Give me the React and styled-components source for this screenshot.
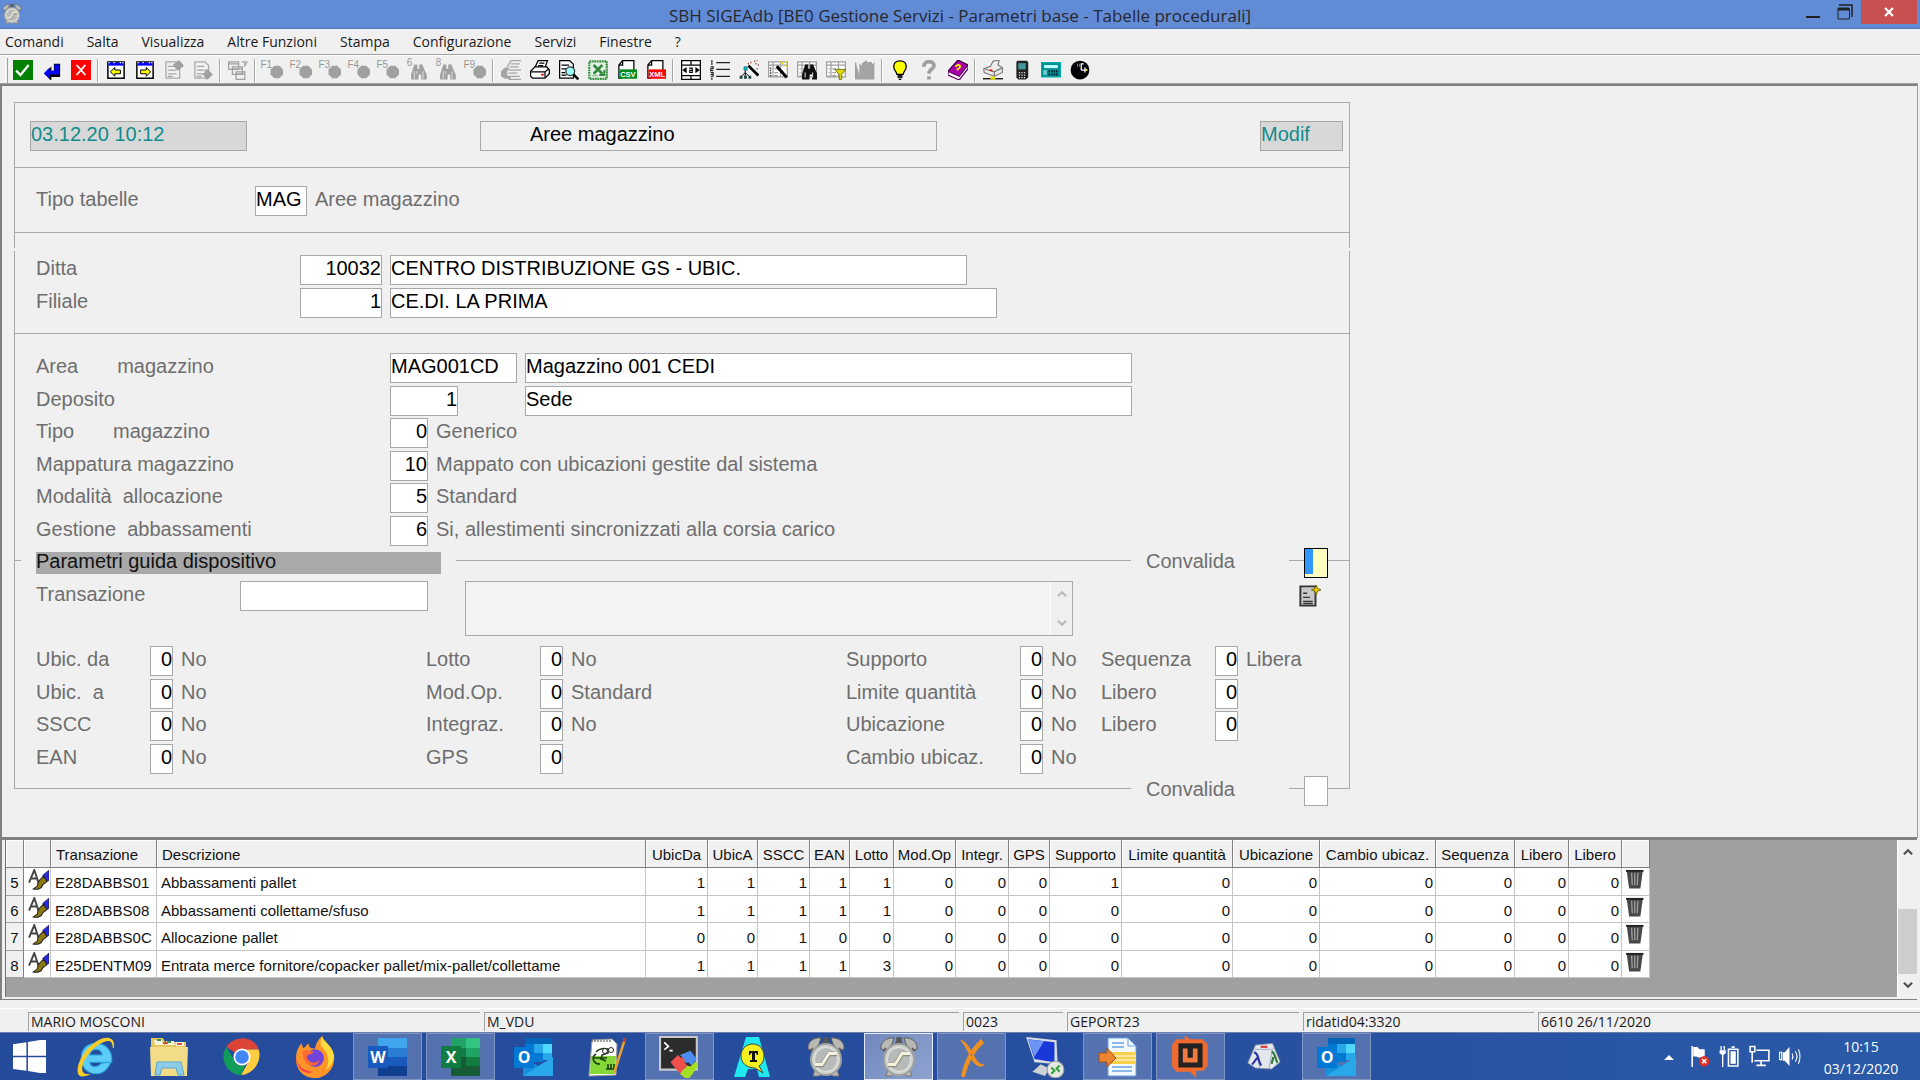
import React, { useId } from 'react';
import styled, { createGlobalStyle, css } from 'styled-components';

const GlobalStyle = createGlobalStyle`
  *, *::before, *::after { box-sizing: border-box; }
  body { margin: 0; background: #f0f0f0; }
  button, input, textarea { font: inherit; color: inherit; margin: 0; border-radius: 0; }
  button { background: none; border: none; padding: 0; }
  svg { display: block; }
`;

const uiFont = `'Open Sans', 'Noto Sans', sans-serif`;
const formFont = `'Liberation Sans', Arial, sans-serif`;

/* ---------- window ---------- */

const Window = styled.div`
  display: flex;
  flex-direction: column;
  min-height: 100vh;
  background: #f0f0f0;
  color: #1a1a1a;
  font-family: ${uiFont};
`;

const TitleBar = styled.header`
  display: grid;
  grid-template-columns: 1fr auto 1fr;
  height: 29px;
  background: #628bd6;
  border-bottom: 1px solid #5474b4;
  color: #26282e;
`;

const AppIcon = styled.div`
  padding: 4px 2px;
`;

const Title = styled.h1`
  margin: 0;
  font-size: 17px;
  font-weight: 400;
  line-height: 32px;
  white-space: nowrap;
`;

const WindowControls = styled.div`
  display: flex;
  justify-content: flex-end;
  align-items: flex-start;
  padding-right: 3px;
`;

const WindowButton = styled.button`
  display: flex;
  align-items: center;
  justify-content: center;
  width: ${p => (p.$close ? 56 : 32)}px;
  height: 24px;
  background: ${p => (p.$close ? '#c75050' : 'none')};
`;

const MenuBar = styled.nav`
  display: flex;
  gap: 23px;
  height: 26px;
  padding: 0 5px;
  border-bottom: 1px solid #a0a0a0;
`;

const MenuLink = styled.a`
  font-size: 14px;
  line-height: 25px;
  color: #1a1a1a;
  text-decoration: none;
`;

const ToolBar = styled.div`
  display: flex;
  height: 29px;
  padding: 2px 0 0 5px;
  border-top: 1px solid #fff;
`;

const ToolGrip = styled.span`
  width: 3px;
  height: 26px;
  border-left: 1px solid #fff;
  border-right: 1px solid #a0a0a0;
`;

const ToolSeparator = styled.span`
  width: 2px;
  height: 23px;
  margin: 1px 2px 0;
  background: #a8a8a8;
  border-right: 1px solid #fff;
`;

const ToolButton = styled.button`
  display: flex;
  justify-content: center;
  width: 29px;
  padding-top: 2px;
`;

/* ---------- form ---------- */

const Workspace = styled.main`
  flex: 1;
  padding: 16px 12px 30px 12px;
  border: solid #808080;
  border-width: 2px 0 0 2px;
  outline: 1px solid #a0a0a0;
  margin-right: 3px;
  font-family: ${formFont};
  font-size: 20px;
  line-height: 24px;
`;

const FrameBlock = styled.div`
  max-width: 1336px;
  border: solid #a8a8a8;
  border-width: ${p => (p.$top ? '1px 1px 0' : '0 1px')};
  padding-bottom: ${p => (p.$top ? 15 : 0)}px;
  & + & { margin-top: 3px; padding-top: 4px; }
`;

const Section = styled.section`
  padding: 18px 6px 16px 21px;
  border-bottom: 1px solid #a8a8a8;
`;

const Heading = styled.div`
  display: grid;
  grid-template-columns: 450px 1fr 83px;
  margin-left: -6px;
`;

const Group = styled.section`
  padding: ${p => p.$pad || '0'};
  border-bottom: ${p => (p.$line ? '1px solid #a8a8a8' : 'none')};
`;

const Row = styled.div`
  display: grid;
  grid-template-columns: ${p => p.$cols};
  column-gap: 8px;
  align-items: start;
  height: 32px;
  padding-left: 21px;
  &:nth-child(odd) { height: 33px; }
`;

const TipoRow = styled.div`
  display: grid;
  grid-template-columns: 211px 52px auto;
  column-gap: 8px;
  justify-content: start;
`;

const Label = styled.label`
  padding-top: 1px;
  color: #6e6e6e;
  white-space: pre;
`;

const Note = styled.span`
  padding-top: 1px;
  color: #6e6e6e;
  white-space: nowrap;
`;

const Field = styled.input`
  width: ${p => (p.$w ? `${p.$w}px` : '100%')};
  height: 30px;
  padding: 0 0 4px;
  border: 1px solid #a8a8a8;
  background: #fff;
  color: #000;
  line-height: 24px;
  text-align: ${p => (p.$num ? 'right' : 'left')};
  outline: none;

  ${p => p.$status && css`
    background: #d8d8d8;
    color: #118c8c;
  `}
  ${p => p.$caption && css`
    background: #f0f0f0;
    padding-left: 49px;
  `}
  ${p => p.$current && css`
    border-color: #000;
    background: linear-gradient(#3296ff, #3296ff) 0 0 / 8px 25px no-repeat #ffffc0;
  `}
`;

const Legend = styled.div`
  display: flex;
  align-items: flex-start;
  height: ${p => (p.$last ? 13 : 33)}px;
`;

const Rule = styled.span`
  flex: ${p => (p.$w ? `0 0 ${p.$w}px` : '1')};
  height: 1px;
  margin-top: 12px;
  background: #a8a8a8;
`;

const LegendTitle = styled.h2`
  width: 405px;
  height: 22px;
  margin: 4px 15px 0;
  background: #a9a9a9;
  color: #111;
  font-size: 20px;
  font-weight: 400;
  line-height: 18px;
`;

const LegendLabel = styled(Label)`
  width: 158px;
  padding-left: 15px;
`;

const TransactionRow = styled.div`
  display: grid;
  grid-template-columns: 196px 217px 608px 1fr;
  column-gap: 8px;
  align-items: start;
  height: 65px;
  padding: 0 28px 0 21px;
`;

const MemoBox = styled.div`
  display: flex;
  height: 55px;
  border: 1px solid #a8a8a8;
  background: #f3f3f3;
`;

const Memo = styled.textarea`
  flex: 1;
  border: none;
  padding: 0;
  resize: none;
  background: none;
  outline: none;
`;

const ScrollColumn = styled.div`
  display: flex;
  flex-direction: column;
  justify-content: space-between;
  width: ${p => (p.$wide ? 20 : 22)}px;
  border-left: 1px solid #fff;
  background: #f0f0f0;
  color: ${p => (p.$wide ? '#505050' : '#b8b8b8')};
`;

const ScrollButton = styled.button`
  display: flex;
  align-items: center;
  justify-content: center;
  height: 24px;
`;

const Thumb = styled.div`
  height: 67px;
  margin-top: 46px;
  background: #cdcdcd;
`;

const NewButton = styled.button`
  justify-self: end;
  padding-top: 4px;
`;

/* ---------- grid ---------- */

const GridPanel = styled.section`
  display: flex;
  height: 163px;
  margin-right: 3px;
  border-top: 3px solid #808080;
  border-left: 2px solid #808080;
  border-bottom: 1px solid #808080;
  padding-bottom: 2px;
  padding-left: 3px;
  font-family: ${formFont};
`;

const GridArea = styled.div`
  flex: 1;
  min-width: 0;
  overflow: hidden;
  background: #a0a0a0;
  border-left: 1px solid #707070;
`;

const Grid = styled.table`
  table-layout: fixed;
  width: 1644px;
  border-collapse: separate;
  border-spacing: 0;
  background: #fff;
  color: #111;
  font-size: 15px;
  line-height: 20px;
  white-space: nowrap;

  tbody tr { height: 27px; }
  tbody tr:nth-child(odd) { height: 28px; }
`;

const HeadCell = styled.th`
  height: 28px;
  padding: ${p => (p.$left ? '3px 0 0 5px' : '3px 0 0')};
  background: #f0f0f0;
  border: solid #808080;
  border-width: 0 1px 1px 0;
  box-shadow: inset 1px 1px #fff;
  font-weight: 400;
  text-align: ${p => (p.$left ? 'left' : 'center')};
`;

const RowHead = styled.th`
  padding: 3px 0 0;
  background: #f0f0f0;
  border: solid #808080;
  border-width: 0 1px 1px 0;
  border-bottom-color: #a0a0a0;
  font-weight: 400;
`;

const Cell = styled.td`
  padding: ${p => (p.$num ? '3px 2px 0 0' : '3px 0 0 4px')};
  border: solid #c4c4c4;
  border-width: 0 1px 1px 0;
  text-align: ${p => (p.$num ? 'right' : 'left')};
`;

const IconCell = styled(Cell)`
  padding: 1px 0 0 4px;
  vertical-align: top;
`;

const CellButton = styled.button`
  display: block;
`;

/* ---------- status bar and task bar ---------- */

const StatusBar = styled.footer`
  display: grid;
  grid-template-columns: 452fr 475fr 100fr 232fr 231fr 382fr;
  column-gap: 4px;
  margin-top: 8px;
  padding: 3px 0 1px 28px;
  border-top: 1px solid #fff;
`;

const StatusCell = styled.div`
  height: 19px;
  padding-left: 2px;
  border: solid #a0a0a0;
  border-width: 1px 0 0 1px;
  font-size: 14px;
  line-height: 18px;
  white-space: nowrap;
`;

const TaskBar = styled.div`
  display: flex;
  height: 48px;
  background: linear-gradient(90deg, #254b9b, #274f9f 60%, #2a5aa8);
  border-top: 1px solid #6a7fae;
`;

const StartButton = styled.button`
  width: 61px;
  padding-left: 13px;
`;

const Tasks = styled.div`
  display: flex;
  flex: 1;
  gap: 4px;
`;

const TaskButton = styled.button`
  display: flex;
  align-items: center;
  justify-content: center;
  width: 69px;
  border: 1px solid transparent;
  ${p => p.$open && css`
    background: #5471b0;
    border-color: #8296c4;
  `}
  ${p => p.$active && css`
    background: linear-gradient(135deg, #7088bd, #8fa3d0);
    border-color: #e4eaf6;
  `}
`;

const Tray = styled.div`
  display: flex;
  align-items: center;
  gap: 7px;
  color: #fff;
`;

const TrayButton = styled.button`
  width: 23px;
`;

const Clock = styled.time`
  width: 112px;
  padding: 2px 6px 0 0;
  font-size: 14px;
  line-height: 22px;
  text-align: center;
`;

/* ---------- icons ---------- */

const Pic = ({ size = 20, box = 16, children, ...rest }) => (
  <svg width={size} height={size} viewBox={`0 0 ${box} ${box}`} fill="none" aria-hidden="true" {...rest}>
    {children}
  </svg>
);

const AlarmClock = ({ size }) => (
  <Pic size={size} box={40}>
    <path d="M10 30l-3 9h6l4-4zM30 30l3 9h-6l-4-4z" fill="#b8b8b4" stroke="#777" />
    <path d="M2 12C1 5 8 0 15 1l-2 6-6 7zM38 12c1-7-6-12-13-11l2 6 6 7z" fill="#b8b8b4" stroke="#5c5c58" />
    <path d="M18 1h4v6h-4zM4 14l3-3M36 14l-3-3M16 6h8" fill="#555" stroke="#555" strokeWidth="1.500" />
    <ellipse cx="20" cy="22.500" rx="15" ry="15.500" fill="#d2d4d0" stroke="#a0a29e" strokeWidth="2" />
    <ellipse cx="20" cy="22.500" rx="11.500" ry="12" fill="#b6bab8" stroke="#e6e6e2" />
    <path d="M9 28h7l7-11h8" stroke="#8c8c80" strokeWidth="4.500" />
    <path d="M9 27.500h7l7-11h8" stroke="#f4f2dc" strokeWidth="2.800" />
  </Pic>
);

const Ok = () => (
  <Pic><path fill="#008000" d="M0 0h16v16H0z" /><path d="M2.500 8.500L6 12l6.500-8" stroke="#fff" strokeWidth="1.800" /></Pic>
);
const Enter = () => (
  <Pic>
    <path d="M2.500 11L7 6.500V9h3V3.500h4V13H7v2.500z" fill="#000" stroke="#000" />
    <path d="M1.500 10.500L6 6v2.500h4V3.500h3.500v8H6V15z" fill="#00f" />
  </Pic>
);
const Cancel = () => (
  <Pic><path fill="#f00" d="M0 0h16v16H0z" /><path d="M4.500 4l7 8m0-8l-7 8" stroke="#fff" strokeWidth="1.500" /></Pic>
);
const PageTurn = ({ next }) => (
  <Pic>
    <path d="M1.500 1.500h13v13h-13z" fill="#fff" stroke="#000" strokeWidth="1.200" />
    <path d="M2 2h12v2.500H2z" fill="#00f" />
    <path d="M2 2h1m3 0h1m4 0h1m1 0h1" stroke="#fff" />
    <path d={next ? 'M12.500 9.500L9 6v2H4.500v3H9v2z' : 'M3.500 9.500L7 6v2h4.500v3H7v2z'} fill="#ff0" stroke="#000" strokeWidth=".8" />
  </Pic>
);
const DimPage = ({ low }) => (
  <Pic>
    <path d="M1.500 1.500h8l3 3v10h-11zM3 5h6M3 8h7M3 11h7M3 13h4" stroke="#a8a8a8" />
    <path d={low ? 'M11 7l5 4.500-5 4.500-3-4.500z' : 'M7 4l5-4 4 4.500-5 4z'} fill="#a0a0a0" />
  </Pic>
);
const DimWindows = () => (
  <Pic>
    <path d="M.5 1.500h8v6h-8zM3.500 5.500h8v6h-8zM6.500 9.500h7v6h-7zM1 3h8M4 7h8M7 11h7M11 1.500h2.500V5m2-4L13 5.500" stroke="#a0a0a0" />
  </Pic>
);
const KeyMark = styled.text`
  font-family: ${formFont};
  font-size: 8px;
  fill: #989898;
`;
const FnKey = ({ name }) => (
  <Pic overflow="visible">
    <KeyMark x="-2" y="6">{name}</KeyMark>
    <path d="M9 4.500h4l3 3v4l-3 3H9l-3-3v-4z" fill="#a0a0a0" />
  </Pic>
);
const Glasses = ({ fill = '#a0a0a0' }) => (
  <path d="M4 3.500h2.500V7H8V3.500h2.500l1.500 4 2 4v4H9.500v-4h-2v4H1.500v-4z" fill={fill} />
);
const FnFind = ({ name }) => (
  <Pic overflow="visible">
    <KeyMark x="-1" y="5">{name}</KeyMark>
    <g transform="translate(1 0)"><Glasses /></g>
    <path d="M5 9v6m2-6v2m5-2v6" stroke="#e8e8e8" strokeWidth=".7" />
  </Pic>
);
const Printer = () => (
  <Pic>
    <path d="M4 6L6.500.500h7.500L12 6" fill="#fff" stroke="#000" /><path d="M7.500 2.500h4M6.500 4.500h4" stroke="#000" />
    <path d="M.5 9L4 5.500h9.500L15.500 8v3L12 14.500H2L.5 13z" fill="#fff" stroke="#000" />
    <path d="M1 9.500h11l3-2.500M12 9.500v4.500" stroke="#000" /><path d="M9 11.800h2" stroke="#e00" strokeWidth="1.500" />
  </Pic>
);
const DimPrinter = () => (
  <Pic>
    <path d="M5 5.500L8 .5h8M8 3h7M7 5.500h7M6 8h10M6 10.500h7M6 13h9M6 15.500h10" stroke="#a4a4a4" />
    <path d="M0 9l3-3h4l-2 3v3l3 2v1H3l-3-2z" fill="#a4a4a4" />
  </Pic>
);
const Preview = () => (
  <Pic>
    <path d="M.5 .5h8l3 3v11H.500z" fill="#fff" stroke="#000" />
    <path d="M2 4h6M2 7h4M2 10h3M2 12h4" stroke="#000" />
    <circle cx="9" cy="9" r="3.500" fill="#9ff" stroke="#333" />
    <path d="M11.500 11.500l4 4" stroke="#000" strokeWidth="2" />
  </Pic>
);
const Excel = () => (
  <Pic>
    <path d="M1 1h14v14H1z" fill="#e4f0e4" stroke="#3c9246" strokeWidth="1.800" strokeDasharray="1.500 .500" />
    <path d="M4.500 4l7 7M11.500 4l-7 7" stroke="#2f8a3a" strokeWidth="2" />
    <path d="M9 12h4V8" stroke="#2f8a3a" strokeWidth="1.500" /><path d="M3 12.500h5" stroke="#8cc08c" />
  </Pic>
);
const FileTag = styled.text`
  font-family: ${formFont};
  font-size: 6px;
  font-weight: 700;
  fill: #fff;
`;
const TaggedFile = ({ tag, color }) => (
  <Pic>
    <path d="M1.500 15V4L4.500.500h9V8M4.500.500V4h-3M1.500 14.500H4" fill="#fff" stroke="#000" />
    <path d="M2 7.500h14V15H2z" fill={color} />
    <FileTag x="2.500" y="13.500">{tag}</FileTag>
  </Pic>
);
const Fit = () => (
  <Pic>
    <path d="M.5 .5h15v15H.500zM.500 4h15M.500 12.500h15M8 .5v3.500m0 8.500V15" stroke="#000" fill="#fff" />
    <path d="M4.500 5.500v5L1 8zM11.500 5.500v5L15 8z" fill="#000" />
    <path d="M6.500 6.500H9V10H7V8.300h2" stroke="#000" strokeWidth=".9" />
  </Pic>
);
const Numbered = () => (
  <Pic>
    <path d="M5 2h11M5 7.500h11M5 13h11" stroke="#222" />
    <path d="M1.500 0v4M.500 5.500h2v1.500h-2v1.500h2M.500 10h2v1.500h-2m2 0V13h-2M1.500 14v2" stroke="#222" strokeWidth=".9" />
  </Pic>
);
const Wand = () => (
  <Pic>
    <path d="M5 6v4m0 0l-3 3m3-3l3 3M5 10v3" stroke="#000" strokeWidth=".8" />
    <path d="M4 5.500h2.500V8H4z" fill="#0cc" stroke="#067" strokeWidth=".6" />
    <path d="M.5 12.500h2.300v2.500H.500zM4 12.500h2.300v2.500H4zM7.500 12.500h2.300v2.500H7.500z" fill="#244" />
    <path d="M7.500 4.500l8 8" stroke="#000" strokeWidth="2.200" />
    <path d="M9 2h1m2-1h1m1-1h1m-2 3h1m1 1h1m-9-1h1m6 4h1" stroke="#a44" strokeWidth="1.300" />
  </Pic>
);
const Sheet = () => (
  <path d="M.5 1.500h15v12H.500zM1 4h14M4 2v11M10 2v11M2 7h1m2 0h3m-6 3h1m2 0h3m-6 2.500h1m2 0h3" stroke="#a0a0a0" fill="#fff" />
);
const SheetWand = () => (
  <Pic><Sheet /><path d="M2 6v7" stroke="#222" strokeDasharray="1 1" /><path d="M7 5l8 9" stroke="#000" strokeWidth="2.400" /><path d="M9 1.500h1m1 1h1m2-1h1m-3 3h1m1 0h1" stroke="#dd0" strokeWidth="1.400" /></Pic>
);
const SheetFind = () => (
  <Pic><Sheet /><g transform="translate(2.500 0)"><Glasses fill="#111" /></g><path d="M6.500 10v4m6-4v4" stroke="#fff" strokeWidth=".7" /></Pic>
);
const SheetFilter = () => (
  <Pic><Sheet /><path d="M7 7.500h9l-3.500 4v4h-2v-4z" fill="#dd0" stroke="#550" strokeWidth=".6" /></Pic>
);
const DimChart = () => (
  <Pic><path d="M.5 2v13H15V3l-2 2V2h-2v3L9 1 6 3v3L4 4v9" fill="#a4a4a4" stroke="#a0a0a0" /></Pic>
);
const Bulb = () => (
  <Pic>
    <path d="M8 .7C4.500.700 3 3 3 5.500c0 2.500 2.500 4 2.500 6h5c0-2 2.500-3.500 2.500-6C13 3 11.500.7 8 .7z" fill="#ff0" stroke="#000" />
    <path d="M6 12h4v2.500H6z" fill="#222" /><path d="M7 15.500h2" stroke="#000" />
  </Pic>
);
const DimHelp = () => (
  <Pic><path d="M4 5.500C3.500 0 12 0 12 4.500c0 3-4 2.500-4 6.500m0 2v2.500" stroke="#a0a0a0" strokeWidth="3" /></Pic>
);
const Book = () => (
  <Pic>
    <path d="M0 9L8 0l8 4-7 10z" fill="#a0a" stroke="#404" />
    <path d="M0 9l9 4 7-9v3l-7 9-9-4z" fill="#fff" stroke="#606" />
    <path d="M6 5.500c2-3 5-1 3 1l-2 1.500" stroke="#fe0" strokeWidth="1.500" />
  </Pic>
);
const NetPrinter = () => (
  <Pic>
    <path d="M.5 7L6 5l2-4 5-1-1 4 3.500 2v4L9 13l-8-3z" fill="#ececec" stroke="#777" strokeWidth=".9" />
    <path d="M1 7l8 2.500 6-3M9 9.500V13" stroke="#777" /><path d="M5.500 8l2 .500" stroke="#e00" strokeWidth="1.400" />
    <path d="M0 15h16" stroke="#000" /><path d="M6 14.500h4" stroke="#dd0" strokeWidth="2.500" />
  </Pic>
);
const Handheld = () => (
  <Pic>
    <path d="M4 .5h8l1 1.500v12l-2 1.500H5L3.500 14V2z" fill="#222" /><path d="M5 2.500h6v5H5z" fill="#499" />
    <path d="M5.500 10h5m-5 2h5m-5 2h5" stroke="#ddd" strokeDasharray="1 1" />
  </Pic>
);
const Terminal = () => (
  <Pic>
    <path d="M.5 2h15v11.500H.500z" fill="#008c8c" stroke="#0aa" /><path d="M2.500 4h11v2.500h-11z" fill="#bff" />
    <path d="M2.500 8v4m1.500-4v4" stroke="#bff" strokeWidth=".8" /><path d="M6 9h8M6 11.500h8" stroke="#023" strokeWidth="1.600" strokeDasharray="1.200 .800" />
  </Pic>
);
const Dial = () => (
  <Pic>
    <circle cx="8" cy="8" r="7.500" fill="#000" /><path d="M9 8V3h2M9 8h5m-2-2v4" stroke="#fff" />
    <path d="M6 3v2.500M7.500 3v2.500" stroke="#888" strokeWidth=".7" /><path d="M12 6l2 2-2 1" fill="#dd0" />
  </Pic>
);

const NewPage = () => (
  <Pic size={22}>
    <path d="M1 1h11v14H1z" fill="#c8c8c8" stroke="#333" strokeWidth="1.400" />
    <path d="M3 6h3M3 9h5M3 12h7M3 13.500h7" stroke="#333" />
    <path d="M12.500 0l1 2.500L16 3.500l-2.500 1-1 2.500-1-2.500L9 3.500l2.500-1z" fill="#e4c800" stroke="#665800" strokeWidth=".6" />
  </Pic>
);
const EditMark = () => (
  <Pic size={21} box={20}>
    <path d="M1 13L6 1l4 12M2 9h7" stroke="#444" strokeWidth="1.800" />
    <path d="M14 6l6-5v10l-5 2z" fill="#2828e0" stroke="#223" strokeWidth=".6" />
    <path d="M15 7l3 5-4 3c-1 4-5 5-9 4l4-3c0-4 3-7 6-9z" fill="#8c7a10" stroke="#222" />
  </Pic>
);
const Trash = () => (
  <Pic size={20}>
    <path d="M.5 1h13l-2 14.500h-9z" fill="#484848" /><path d="M4.500 3L5 13M7 3v10m2.500-10L9 13" stroke="#a4a4a4" />
    <path d="M0 1.500h14" stroke="#222" strokeWidth="1.500" />
  </Pic>
);
const Chevron = ({ down }) => (
  <svg width="10" height="8" viewBox="0 0 11 8" fill="none" aria-hidden="true">
    <path d={down ? 'M1 1.500l4.500 4.500L10 1.500' : 'M1 6.500L5.500 2 10 6.500'} stroke="currentColor" strokeWidth="2.400" />
  </svg>
);

const Letter = styled.text`
  font-family: 'Open Sans', sans-serif;
  font-size: 16px;
  font-weight: 700;
  fill: #fff;
  text-anchor: middle;
`;

const WindowsLogo = () => (
  <Pic size={33} box={32}>
    <path d="M0 4L13 2.200V15.200H0zM14.500 2L32 -1v16.200H14.500zM0 16.800h13v13L0 28zM14.500 16.800H32V33l-17.500-3z" fill="#fff" />
  </Pic>
);
const Explorer = () => (
  <Pic size={42} box={40}>
    <path d="M34 25c-2 6-7 11-14 11C12 36 6 30 6 21S12 7 20 7s15 6 15 15v3H14c1 5 7 6 11 1zM14 18h12c-1-7-11-7-12 0z" fill="#5ccdf8" stroke="#2aa4de" />
    <path d="M37 11C39-1 27 0 19 6 9 13 0 28 3 36c1 4 7 3 12 0-6 1-9-1-8-7 2-9 12-20 20-23 6-3 9-1 9 6z" fill="#f8cc28" />
  </Pic>
);
const Folder = () => (
  <Pic size={40} box={40}>
    <path d="M2 1h12l2 4h21v33H2z" fill="#e6c75c" /><path d="M5 3h8l2 5h-9zM17 4h8l1 4h-9zM27 5h8v4h-8z" fill="#f8f4dc" />
    <path d="M8 3h4M18 5h4" stroke="#3a9a4a" strokeWidth="2" /><path d="M14 6h5M28 7h5" stroke="#d8543c" strokeWidth="2" />
    <path d="M1 10h38l-1 29H2z" fill="#f2dc88" /><path d="M6 38l2-13h24l3 13h-6l-2-7H13l-2 7z" fill="#8ccce8" stroke="#5aa6d0" />
  </Pic>
);
const Chrome = () => (
  <Pic size={38} box={40}>
    <path d="M20 20L3.500 9.500C13-4 33-2 37.500 12H20z" fill="#db4437" />
    <path d="M20 12h17.500c4 12-5 26-18.500 27l8.500-15z" fill="#ffcd40" />
    <path d="M3.500 9.500l9 15c2 4 6 5 11 4L19 39C3 38-4 21 3.500 9.500z" fill="#0f9d58" />
    <circle cx="20" cy="20" r="9" fill="#fff" /><circle cx="20" cy="20" r="7.200" fill="#4285f4" />
  </Pic>
);
const Firefox = () => (
  <Pic size={42} box={40}>
    <path d="M27 0c0 5 9 8 11 18 2 12-7 22-18 22S1 32 2 20c0-5 2-9 5-13l2 5 5-5c0 4 2 5 6 5 1-5 3-9 7-12z" fill="#ff9428" />
    <path d="M27 0c0 5 9 8 11 18 0 8-4 12-8 14 6-9 1-18-4-22-1-4-1-7 1-10z" fill="#ffdc3c" />
    <path d="M2 20c1 9 8 14 16 14-7 4-16-3-16-14z" fill="#ff3a50" />
    <circle cx="20" cy="21" r="8.500" fill="#7444d8" /><path d="M8 14c5-2 7 1 11 1-2 3-6 2-7 5 2 6 8 7 12 3-1 8-16 8-16-9z" fill="#ff6a30" />
  </Pic>
);
const WordLogo = () => (
  <Pic size={40} box={40}>
    <path d="M10 1h29v10H10z" fill="#41a5ee" /><path d="M10 11h29v9H10z" fill="#2b7cd3" />
    <path d="M10 20h29v9H10z" fill="#185abd" /><path d="M10 29h29v10H10z" fill="#103f91" />
    <path d="M0 9h20v22H0z" fill="#185abd" /><Letter x="10" y="26">W</Letter>
  </Pic>
);
const ExcelLogo = () => (
  <Pic size={40} box={40}>
    <path d="M10 1h15v10H10z" fill="#21a366" /><path d="M25 1h14v10H25z" fill="#33c481" />
    <path d="M10 11h15v9H10z" fill="#107c41" /><path d="M25 11h14v9H25z" fill="#21a366" />
    <path d="M10 20h29v19H10z" fill="#185c37" /><path d="M25 20h14v9H25z" fill="#107c41" />
    <path d="M0 9h20v22H0z" fill="#107c41" /><Letter x="10" y="26">X</Letter>
  </Pic>
);
const OutlookLogo = () => (
  <Pic size={40} box={40}>
    <path d="M11 1h27v19H11z" fill="#0364b8" /><path d="M11 7h9v9h-9z" fill="#0078d4" /><path d="M20 7h9v9h-9z" fill="#28a8ea" />
    <path d="M29 7h9v9h-9z" fill="#50d9ff" /><path d="M20 16h9v9h-9z" fill="#0078d4" /><path d="M29 16h9v7h-9z" fill="#28a8ea" />
    <path d="M9 20l15 9 15-9v19H9z" fill="#1490df" /><path d="M9 39l30-19v19z" fill="#28a8ea" />
    <path d="M0 10h20v21H0z" fill="#0078d4" /><Letter x="10" y="26">O</Letter>
  </Pic>
);
const NotepadLogo = () => (
  <Pic size={40} box={40}>
    <path d="M5 3l20-1 5 5-1 31-27 1z" fill="#fff" stroke="#999" /><path d="M4 4h21" stroke="#444" strokeDasharray="2 1" />
    <path d="M4 19h25l-1 18H3z" fill="#86d838" />
    <path d="M9 15c4-4 8-4 12-3v4l-6 2-1 4 5 2M9 17c-5 3-3 10 4 10m-7-6h14m1 6v5m3-5v5m3-5v5m-8 0h10" stroke="#1c3c14" strokeWidth="1.600" />
    <circle cx="18" cy="14" r="2.500" fill="#fff" stroke="#222" /><circle cx="24" cy="13" r="2.500" fill="#fff" stroke="#222" />
    <path d="M38 2L27 36" stroke="#e8a030" strokeWidth="2.500" /><path d="M38 1l-1 4" stroke="#b84030" strokeWidth="3" />
  </Pic>
);
const CmderLogo = () => (
  <Pic size={42} box={40}>
    <path d="M1 1h35v31H1z" fill="#2c2c2c" stroke="#c8c8c8" strokeWidth="2" /><path d="M5 6l4 4-4 3m5 1h3" stroke="#fff" strokeWidth="1.600" />
    <path d="M11 25l7-7 3 3 3-2 2 3-2 3 3 3-7 8z" fill="#f0504c" /><path d="M20 18l10-4 6 8-5 6-3-3-3 1-1-4z" fill="#4c8ef0" />
    <path d="M20 36l7-8 3 1 5-5 2 5-8 11-3 1z" fill="#a4e020" />
  </Pic>
);
const AutoLogo = () => (
  <Pic size={40} box={40}>
    <path d="M13 0h13l11 40H26l-2-8h-9l-3 8H1z" fill="#1fe8f0" />
    <path d="M20 7c7 0 11 6 11 12 0 5-2 8-5 10l4 7-8-5C14 31 8 26 8 19S13 7 20 7z" fill="#f4f020" stroke="#444" />
    <path d="M16 14h9v4h-1l-1-2h-1v7h2v2h-7v-2h2v-7h-1l-1 2h-1z" fill="#111" />
  </Pic>
);
const CrossLogo = () => (
  <Pic size={40} box={40}>
    <path d="M10 4c4 1 7 7 11 14 3 6 6 10 10 10-2 2-7 1-11-6C16 14 14 9 10 4zM29 3C20 11 12 25 10 39l2 1c3-13 9-25 19-34z" fill="#f09020" stroke="#f09020" strokeWidth="1.500" />
  </Pic>
);
const RemoteLogo = () => (
  <Pic size={42} box={40}>
    <path d="M2 1l29 3 1 23-22-2z" fill="#d8dce4" /><path d="M4 3l25 3v19L10 22z" fill="#1838d8" /><path d="M4 3l15 2-9 15z" fill="#6c94f4" />
    <path d="M8 34l8-7 8 4-4 7z" fill="#ccd0d4" /><circle cx="30" cy="32" r="8" fill="#e4e8e4" stroke="#999" />
    <path d="M26 30l3 3-3 3m8-8l-3 3 3 3" stroke="#38a038" strokeWidth="2" />
  </Pic>
);
const ExportLogo = () => (
  <Pic size={40} box={40}>
    <path d="M10 1h20l8 8v30H10z" fill="#f2f8ff" stroke="#6aa2dc" /><path d="M30 1v8h8" stroke="#6aa2dc" />
    <path d="M14 6h12M14 10h12M14 30h20M14 34h20" stroke="#6aa2dc" strokeWidth="1.500" /><path d="M10 15h28v12H10z" fill="#f8d048" />
    <path d="M10 19h28M10 23h28" stroke="#fff" /><path d="M1 16h8v-5l9 10-9 9v-5H1z" fill="#ec8430" stroke="#a04c14" />
  </Pic>
);
const HexLogo = () => (
  <Pic size={42} box={40}>
    <path d="M6 3h8V-1l5 4h12l5 5v20l-4 5h-7v7l-6-6H6l-4-5V8z" fill="#f06a30" /><path d="M8 7h23v23H8z" fill="#222" />
    <path d="M14.500 12v11H24V12" stroke="#f07a40" strokeWidth="4.500" />
  </Pic>
);
const DiceLogo = () => (
  <Pic size={34} box={40}>
    <path d="M10 6l20-2 9 22-10 8-19-1-9-6z" fill="#e4e8ec" stroke="#8a94a8" /><path d="M10 12l5 21M30 10l-4 23M10 11h19" stroke="#98a4b8" />
    <path d="M16 8h8" stroke="#d83838" strokeWidth="2.500" /><path d="M8 15c6-1 5 12 9 15M12 21l-6 8" stroke="#2838a8" strokeWidth="2.500" />
    <path d="M29 14c4 0 4 9 7 13m-5-7l-2 8" stroke="#2a7a3a" strokeWidth="2.500" />
  </Pic>
);

/* ---------- data ---------- */

const menu = ['Comandi', 'Salta', 'Visualizza', 'Altre Funzioni', 'Stampa', 'Configurazione', 'Servizi', 'Finestre', '?'];

const toolGroups = [
  [['Conferma', <Ok />], ['Invio', <Enter />], ['Annulla', <Cancel />]],
  [['Pagina precedente', <PageTurn />], ['Pagina successiva', <PageTurn next />], ['Inizio', <DimPage />], ['Fine', <DimPage low />]],
  [['Finestre', <DimWindows />]],
  [
    ...['F1', 'F2', 'F3', 'F4', 'F5'].map(k => [k, <FnKey name={k} />]),
    ['F6', <FnFind name="6" />], ['F8', <FnFind name="8" />], ['F9', <FnKey name="F9" />],
  ],
  [
    ['Stampa video', <DimPrinter />], ['Stampa', <Printer />], ['Anteprima', <Preview />],
    ['Excel', <Excel />], ['CSV', <TaggedFile tag="CSV" color="#008c20" />], ['XML', <TaggedFile tag="XML" color="#f00" />],
  ],
  [
    ['Adatta colonne', <Fit />], ['Numerazione', <Numbered />], ['Struttura', <Wand />], ['Personalizza', <SheetWand />],
    ['Cerca', <SheetFind />], ['Filtra', <SheetFilter />], ['Grafico', <DimChart />],
  ],
  [['Suggerimenti', <Bulb />], ['Aiuto', <DimHelp />], ['Manuale', <Book />]],
  [['Stampante', <NetPrinter />], ['Palmare', <Handheld />], ['Terminale', <Terminal />], ['Sessione', <Dial />]],
];

const areaRows = [
  ['Tipo       magazzino', '0', 'Generico'],
  ['Mappatura magazzino', '10', 'Mappato con ubicazioni gestite dal sistema'],
  ['Modalità  allocazione', '5', 'Standard'],
  ['Gestione  abbassamenti', '6', 'Si, allestimenti sincronizzati alla corsia carico'],
];

const params = [
  [['Ubic. da', 'No'], ['Lotto', 'No'], ['Supporto', 'No'], ['Sequenza', 'Libera']],
  [['Ubic.  a', 'No'], ['Mod.Op.', 'Standard'], ['Limite quantità', 'No'], ['Libero', '']],
  [['SSCC', 'No'], ['Integraz.', 'No'], ['Ubicazione', 'No'], ['Libero', '']],
  [['EAN', 'No'], ['GPS', ''], ['Cambio ubicaz.', 'No']],
];

const columns = [
  ['', 18], ['', 27], ['Transazione', 106], ['Descrizione', 489], ['UbicDa', 62], ['UbicA', 50], ['SSCC', 52],
  ['EAN', 40], ['Lotto', 44], ['Mod.Op', 62], ['Integr.', 53], ['GPS', 41], ['Supporto', 72], ['Limite quantità', 111],
  ['Ubicazione', 87], ['Cambio ubicaz.', 116], ['Sequenza', 79], ['Libero', 54], ['Libero', 53], ['', 28],
];

const records = [
  [5, 'E28DABBS01', 'Abbassamenti pallet', [1, 1, 1, 1, 1, 0, 0, 0, 1, 0, 0, 0, 0, 0, 0]],
  [6, 'E28DABBS08', 'Abbassamenti collettame/sfuso', [1, 1, 1, 1, 1, 0, 0, 0, 0, 0, 0, 0, 0, 0, 0]],
  [7, 'E28DABBS0C', 'Allocazione pallet', [0, 0, 1, 0, 0, 0, 0, 0, 0, 0, 0, 0, 0, 0, 0]],
  [8, 'E25DENTM09', 'Entrata merce fornitore/copacker pallet/mix-pallet/collettame', [1, 1, 1, 1, 3, 0, 0, 0, 0, 0, 0, 0, 0, 0, 0]],
];

const status = ['MARIO MOSCONI', 'M_VDU', '0023', 'GEPORT23', 'ridatid04:3320', '6610 26/11/2020'];

const tasks = [
  ['Internet Explorer', <Explorer />], ['Esplora file', <Folder />], ['Chrome', <Chrome />], ['Firefox', <Firefox />],
  ['Word', <WordLogo />, 'open'], ['Excel', <ExcelLogo />, 'open'], ['Outlook', <OutlookLogo />], ['Notepad++', <NotepadLogo />],
  ['Cmder', <CmderLogo />, 'open'], ['AutoText', <AutoLogo />], ['SIGEA', <AlarmClock size={40} />],
  ['SBH SIGEAdb', <AlarmClock size={40} />, 'active'], ['X Server', <CrossLogo />, 'open'], ['Desktop remoto', <RemoteLogo />],
  ['Trasferimento file', <ExportLogo />, 'open'], ['UltraEdit', <HexLogo />, 'open'], ['Lambda', <DiceLogo />],
  ['Posta Outlook', <OutlookLogo />, 'open'],
];

/* ---------- parts ---------- */

const CodeRow = ({ label, value, note }) => {
  const id = useId();
  return (
    <Row $cols="346px 38px auto">
      <Label htmlFor={id}>{label}</Label>
      <Field id={id} $num defaultValue={value} />
      <Note>{note}</Note>
    </Row>
  );
};

const Param = ({ label, note }) => {
  const id = useId();
  return (
    <>
      <Label htmlFor={id}>{label}</Label>
      <Field id={id} $num defaultValue="0" />
      <Note>{note}</Note>
    </>
  );
};

const Confirm = ({ current }) => {
  const id = useId();
  return (
    <>
      <LegendLabel htmlFor={id}>Convalida</LegendLabel>
      <Rule $w={15} />
      <Field id={id} $w={24} $current={current} />
      <Rule $w={21} />
    </>
  );
};

const DataGrid = () => (
  <GridPanel>
    <GridArea>
      <Grid>
        <colgroup>
          {columns.map(([, w], i) => <col key={i} width={w} />)}
        </colgroup>
        <thead>
          <tr>
            {columns.map(([name], i) => <HeadCell key={i} $left={i < 4}>{name}</HeadCell>)}
          </tr>
        </thead>
        <tbody>
          {records.map(([n, code, text, values]) => (
            <tr key={n}>
              <RowHead scope="row">{n}</RowHead>
              <IconCell><CellButton aria-label="Modifica riga"><EditMark /></CellButton></IconCell>
              <Cell>{code}</Cell>
              <Cell>{text}</Cell>
              {values.map((v, i) => <Cell key={i} $num>{v}</Cell>)}
              <IconCell><CellButton aria-label="Elimina riga"><Trash /></CellButton></IconCell>
            </tr>
          ))}
        </tbody>
      </Grid>
    </GridArea>
    <ScrollColumn $wide>
      <ScrollButton aria-label="Su"><Chevron /></ScrollButton>
      <Thumb />
      <ScrollButton aria-label="Giù"><Chevron down /></ScrollButton>
    </ScrollColumn>
  </GridPanel>
);

const SystemTray = () => (
  <Tray>
    <TrayButton aria-label="Icone nascoste">
      <Pic size={22} box={22}><path d="M6 14l5-5 5 5z" fill="#fff" /></Pic>
    </TrayButton>
    <TrayButton aria-label="Notifiche">
      <Pic size={23} box={22}>
        <path d="M4 1v20" stroke="#fff" strokeWidth="1.500" /><path d="M5 2h4l2 2h5v8h-6l-2-1H5z" fill="#fff" />
        <circle cx="15.500" cy="15.500" r="5" fill="#e03028" /><path d="M13.500 13.500l4 4m0-4l-4 4" stroke="#fff" strokeWidth="1.500" />
      </Pic>
    </TrayButton>
    <TrayButton aria-label="Batteria">
      <Pic size={23} box={22}>
        <path d="M10 4h9v16h-9zM13 2h3" stroke="#fff" strokeWidth="1.500" /><path d="M12 6h5v12h-5z" fill="#fff" />
        <path d="M3 1v4m3-4v4M4.500 9v12" stroke="#fff" strokeWidth="1.300" /><path d="M1.500 5h6v3l-3 2-3-2z" fill="#fff" />
      </Pic>
    </TrayButton>
    <TrayButton aria-label="Rete">
      <Pic size={23} box={22}>
        <path d="M8 5h12v10H6M12.500 15v4M8 19.500h9M4 7v10M2 1.500h4.500v5H2z" stroke="#fff" strokeWidth="1.500" />
      </Pic>
    </TrayButton>
    <TrayButton aria-label="Volume">
      <Pic size={23} box={22}>
        <path d="M1.500 7v7h2V7z" stroke="#fff" /><path d="M4.500 7h2l4.500-5v18l-4.500-5h-2z" fill="#fff" />
        <path d="M13.500 8c1 2 1 4 0 6m3-8c2 3 2 7 0 10m3-12c2 4 2 10 0 14" stroke="#fff" />
      </Pic>
    </TrayButton>
    <Clock>10:15<br />03/12/2020</Clock>
  </Tray>
);

const App = () => (
  <>
    <GlobalStyle />
    <Window>
      <TitleBar>
        <AppIcon><AlarmClock size={20} /></AppIcon>
        <Title>SBH SIGEAdb [BE0 Gestione Servizi - Parametri base - Tabelle procedurali]</Title>
        <WindowControls>
          <WindowButton aria-label="Riduci a icona">
            <Pic size={16}><path d="M1 13h14" stroke="#222" strokeWidth="2" /></Pic>
          </WindowButton>
          <WindowButton aria-label="Ripristina">
            <Pic size={16}><path d="M2 1h13v12" stroke="#222" strokeWidth="1.500" /><path d="M1 4.500h11.500V15H1z" stroke="#222" /><path d="M1 5h11" stroke="#222" strokeWidth="3" /></Pic>
          </WindowButton>
          <WindowButton $close aria-label="Chiudi">
            <Pic size={14}><path d="M3.500 3.500l9 9m0-9l-9 9" stroke="#fff" strokeWidth="2.600" /></Pic>
          </WindowButton>
        </WindowControls>
      </TitleBar>

      <MenuBar>
        {menu.map(m => <MenuLink key={m} href="#">{m}</MenuLink>)}
      </MenuBar>

      <ToolBar>
        <ToolGrip />
        {toolGroups.map((group, i) => (
          <React.Fragment key={i}>
            {i > 0 && <ToolSeparator />}
            {group.map(([name, icon]) => <ToolButton key={name} aria-label={name}>{icon}</ToolButton>)}
          </React.Fragment>
        ))}
      </ToolBar>

      <Workspace>
        <FrameBlock $top>
          <Section>
            <Heading>
              <Field $status $w={217} readOnly aria-label="Data e ora" defaultValue="03.12.20 10:12" />
              <Field $caption $w={457} readOnly aria-label="Titolo" defaultValue="Aree magazzino" />
              <Field $status readOnly aria-label="Stato" defaultValue="Modif" />
            </Heading>
          </Section>
          <Section>
            <TipoRow>
              <Label htmlFor="tipo">Tipo tabelle</Label>
              <Field id="tipo" defaultValue="MAG" />
              <Note>Aree magazzino</Note>
            </TipoRow>
          </Section>
        </FrameBlock>

        <FrameBlock>
          <Group $pad="0 0 13px" $line>
            <Row $cols="256px 82px 577px">
              <Label htmlFor="ditta">Ditta</Label>
              <Field id="ditta" $num defaultValue="10032" />
              <Field aria-label="Nome ditta" defaultValue="CENTRO DISTRIBUZIONE GS - UBIC." />
            </Row>
            <Row $cols="256px 82px 607px">
              <Label htmlFor="filiale">Filiale</Label>
              <Field id="filiale" $num defaultValue="1" />
              <Field aria-label="Nome filiale" defaultValue="CE.DI. LA PRIMA" />
            </Row>
          </Group>

          <Group $pad="19px 0 0">
            <Row $cols="346px 127px 607px">
              <Label htmlFor="area">{'Area       magazzino'}</Label>
              <Field id="area" defaultValue="MAG001CD" />
              <Field aria-label="Nome area" defaultValue="Magazzino 001 CEDI" />
            </Row>
            <Row $cols="346px 127px 607px">
              <Label htmlFor="deposito">Deposito</Label>
              <Field id="deposito" $num $w={68} defaultValue="1" />
              <Field aria-label="Nome deposito" defaultValue="Sede" />
            </Row>
            {areaRows.map(([label, value, note]) => (
              <CodeRow key={label} label={label} value={value} note={note} />
            ))}
          </Group>

          <Legend>
            <Rule $w={6} />
            <LegendTitle>Parametri guida dispositivo</LegendTitle>
            <Rule />
            <Confirm current />
          </Legend>

          <TransactionRow>
            <Label htmlFor="transazione">Transazione</Label>
            <Field id="transazione" $w={188} />
            <MemoBox>
              <Memo aria-label="Descrizione transazione" readOnly />
              <ScrollColumn>
                <ScrollButton aria-label="Su"><Chevron /></ScrollButton>
                <ScrollButton aria-label="Giù"><Chevron down /></ScrollButton>
              </ScrollColumn>
            </MemoBox>
            <NewButton aria-label="Nuova transazione"><NewPage /></NewButton>
          </TransactionRow>

          <Group>
            {params.map((row, i) => (
              <Row key={i} $cols="106px 23px 237px 106px 23px 267px 166px 23px 42px 106px 23px 1fr">
                {row.map(([label, note]) => <Param key={label} label={label} note={note} />)}
              </Row>
            ))}
          </Group>

          <Legend $last>
            <Rule />
            <Confirm />
          </Legend>
        </FrameBlock>
      </Workspace>

      <DataGrid />

      <StatusBar>
        {status.map(s => <StatusCell key={s}>{s}</StatusCell>)}
      </StatusBar>

      <TaskBar>
        <StartButton aria-label="Start"><WindowsLogo /></StartButton>
        <Tasks>
          {tasks.map(([name, icon, state]) => (
            <TaskButton key={name} aria-label={name} $open={state === 'open'} $active={state === 'active'}>{icon}</TaskButton>
          ))}
        </Tasks>
        <SystemTray />
      </TaskBar>
    </Window>
  </>
);

export default App;
